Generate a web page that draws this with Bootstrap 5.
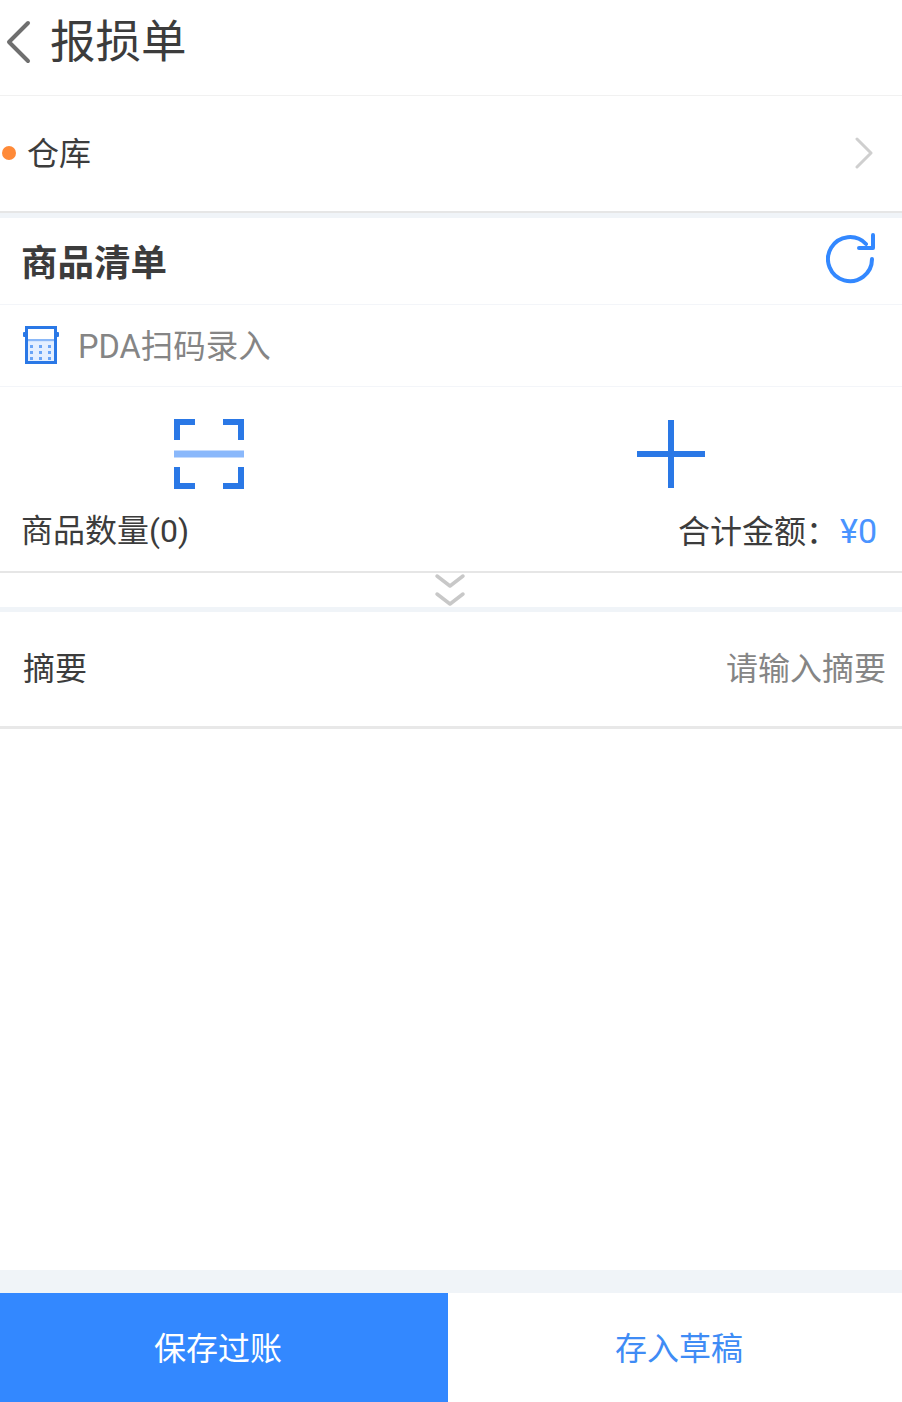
<!DOCTYPE html>
<html lang="zh">
  <head>
    <meta charset="UTF-8" />
    <meta name="viewport" content="width=device-width, initial-scale=1.0" />
    <title>报损单</title>
    <link href="https://cdn.jsdelivr.net/npm/bootstrap@5.3.0/dist/css/bootstrap.min.css" rel="stylesheet" />
    <style>
      html, body { height: 100%; }
      body {
        font-family: Roboto, "Noto Sans CJK SC", sans-serif;
        font-size: 32px;
        line-height: 1.2;
        color: #3c3c3c;
        background: #fff;
      }
      .page { height: 1402px; overflow: hidden; }
      .top-bar { height: 96px; padding: 0 0 8px 6px; border-bottom: 1px solid #f1f1f1; }
      .top-bar svg { margin: 0 19px 4px 0; }
      .top-title { font-size: 45.5px; }
      .stock-row { height: 115px; padding: 2px 29px 0 2px; }
      .stock-row svg { margin-bottom: 4px; }
      .dot { width: 14px; height: 14px; border-radius: 50%; background: #ff8a38; margin: 0 11px 4px 0; }
      .band-a { height: 7px; background: #f0f4f8; border-top: 2px solid #e6e6e6; }
      .list-head { height: 87px; padding: 6px 26px 0 21px; border-bottom: 1px solid #f3f5f9; }
      .list-head svg { margin-bottom: 8px; }
      .list-title { font-size: 36.5px; font-weight: 700; }
      .pda-row { height: 82px; padding: 4px 0 0 22px; border-bottom: 1px solid #f3f5f9; color: #858585; font-size: 32.5px; }
      .pda-row svg { margin: 0 19px 6px 0; }
      .action-row { height: 186px; padding: 32px 25px 0 21px; border-bottom: 2px solid #e6e6e6; }
      .icon-cols { height: 70px; margin-left: -21px; margin-right: -25px; }
      .scan-cell { width: 50%; padding-right: 34px; }
      .plus-cell { width: 50%; padding-right: 12px; }
      .sum-row { margin-top: 22px; }
      .price { color: #4a94ff; font-size: 34px; margin-left: 2px; }
      .fold-row { height: 34px; padding-right: 3px; }
      .band-b { height: 5px; background: #f0f4f8; }
      .memo-row { height: 117px; padding: 0 16px 0 23px; border-bottom: 3px solid #e8e8e8; }
      .memo-hint { color: #858585; }
      .spacer { flex: 1; }
      .band-c { height: 23px; background: #f0f4f8; }
      .foot { height: 109px; }
      .foot-save { width: 448px; background: #3388ff; color: #fff; padding: 4px 12px 0 0; }
      .foot-draft { color: #3f8cf5; padding: 4px 0 0 8px; }
    </style>
  </head>
  <body>
    <div class="page d-flex flex-column">
      <div class="top-bar d-flex align-items-center">
        <svg width="25" height="44" viewBox="0 0 25 44" fill="none" stroke="#6f6f6f" stroke-width="4" stroke-linecap="round" stroke-linejoin="round">
          <path d="M22 3 L3 22 L22 41" />
        </svg>
        <span class="top-title">报损单</span>
      </div>

      <div class="stock-row d-flex align-items-center">
        <span class="dot"></span>
        <span>仓库</span>
        <svg class="ms-auto" width="18" height="32" viewBox="0 0 18 32" fill="none" stroke="#cfcfcf" stroke-width="3" stroke-linecap="round" stroke-linejoin="round">
          <path d="M2 2 L16 16 L2 30" />
        </svg>
      </div>
      <div class="band-a"></div>

      <div class="list-head d-flex align-items-center justify-content-between">
        <span class="list-title">商品清单</span>
        <svg width="50" height="54" viewBox="0 0 50 54" fill="none" stroke="#3388ff" stroke-width="4" stroke-linecap="round" stroke-linejoin="round">
          <path d="M46 26 A22 22 0 1 1 40 11" />
          <path d="M47 2 L47 15 L33 15" />
        </svg>
      </div>

      <div class="pda-row d-flex align-items-center">
        <svg width="37" height="40" viewBox="0 0 37 40">
          <rect x="4.5" y="2.5" width="29" height="35" fill="#fff" stroke="#2a78e6" stroke-width="3" />
          <rect x="1" y="7" width="36" height="5" rx="1" fill="#2a78e6" />
          <rect x="6" y="7" width="26" height="5" fill="#fff" />
          <rect x="6" y="14" width="26" height="2.5" fill="#8ab8f8" />
          <rect x="6" y="16.5" width="26" height="19.5" fill="#e4efff" />
          <g fill="#6aa5f7">
            <rect x="8" y="20" width="3" height="3" /><rect x="17" y="20" width="3" height="3" /><rect x="26" y="20" width="3" height="3" />
            <rect x="8" y="26" width="3" height="3" /><rect x="17" y="26" width="3" height="3" /><rect x="26" y="26" width="3" height="3" />
            <rect x="8" y="32" width="3" height="3" /><rect x="17" y="32" width="3" height="3" /><rect x="26" y="32" width="3" height="3" />
          </g>
        </svg>
        <span>PDA扫码录入</span>
      </div>

      <div class="action-row">
        <div class="icon-cols d-flex">
          <div class="scan-cell d-flex justify-content-center">
            <svg width="70" height="70" viewBox="0 0 70 70" fill="none" stroke="#2a78e6" stroke-width="6">
              <path d="M21 3 H3 V21 M49 3 H67 V21 M3 48 V67 H21 M67 48 V67 H49" />
              <path d="M0 35 H70" stroke="#8ab8fb" stroke-width="7" />
            </svg>
          </div>
          <div class="plus-cell d-flex justify-content-center">
            <svg width="70" height="70" viewBox="0 0 70 70" stroke="#2a78e6" stroke-width="6">
              <path d="M35 1 V69 M1 35 H69" />
            </svg>
          </div>
        </div>
        <div class="sum-row d-flex justify-content-between align-items-center">
          <span>商品数量(0)</span>
          <span>合计金额：<span class="price">¥0</span></span>
        </div>
      </div>

      <div class="fold-row d-flex justify-content-center align-items-center">
        <svg width="32" height="34" viewBox="0 0 32 34" fill="none" stroke="#c8c8c8" stroke-width="3.5" stroke-linecap="round" stroke-linejoin="round">
          <path d="M3 3 L16 13 L29 3" />
          <path d="M3 21 L16 31 L29 21" />
        </svg>
      </div>
      <div class="band-b"></div>

      <div class="memo-row d-flex align-items-center justify-content-between">
        <span>摘要</span>
        <span class="memo-hint">请输入摘要</span>
      </div>

      <div class="spacer"></div>
      <div class="band-c"></div>

      <div class="foot d-flex">
        <div class="foot-save d-flex align-items-center justify-content-center">保存过账</div>
        <div class="foot-draft flex-fill d-flex align-items-center justify-content-center">存入草稿</div>
      </div>
    </div>
    <script src="https://cdn.jsdelivr.net/npm/bootstrap@5.3.0/dist/js/bootstrap.bundle.min.js"></script>
  </body>
</html>
